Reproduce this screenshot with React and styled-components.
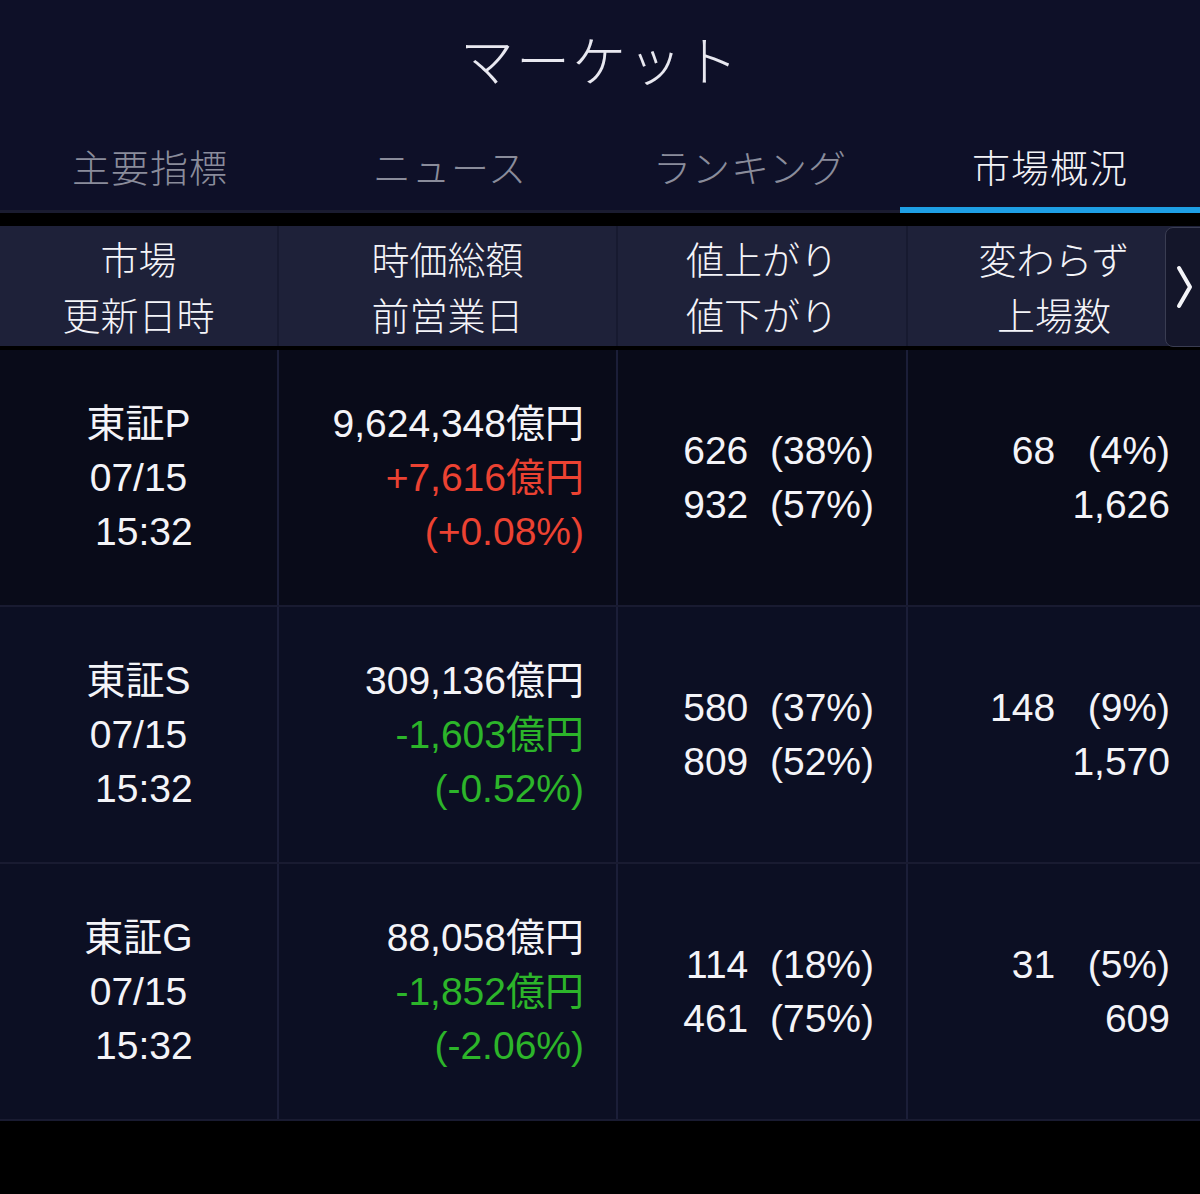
import React from 'react';
import styled, { createGlobalStyle } from 'styled-components';

const GlobalStyle = createGlobalStyle`
  html, body {
    margin: 0;
    padding: 0;
    background: #000;
  }
  body {
    font-family: "Liberation Sans", "Noto Sans CJK JP", sans-serif;
    color: #f4f4f8;
  }
`;

const Screen = styled.div`
  width: 1200px;
  height: 1194px;
  background: #000;
  overflow: hidden;
`;

const TitleBar = styled.header`
  height: 125px;
  background: #0e1028;
  display: flex;
  align-items: center;
  justify-content: center;
`;

const Title = styled.h1`
  margin: 0;
  font-family: "Noto Sans CJK JP", sans-serif;
  font-size: 54px;
  font-weight: 300;
  letter-spacing: 2px;
  color: #e8e8f0;
  padding-bottom: 8px;
`;

const TabBar = styled.nav`
  height: 88px;
  background: #0e1028;
  display: grid;
  grid-template-columns: repeat(4, 1fr);
  border-bottom: 3px solid #1a1c30;
  box-sizing: border-box;
`;

const Tab = styled.div`
  position: relative;
  display: flex;
  align-items: center;
  justify-content: center;
  padding-bottom: 4px;
  font-family: "Noto Sans CJK JP", sans-serif;
  font-size: 38px;
  font-weight: 300;
  letter-spacing: 1px;
  color: ${p => (p.$active ? '#f2f2f6' : '#8a8c9b')};

  &::after {
    content: '';
    display: ${p => (p.$active ? 'block' : 'none')};
    position: absolute;
    left: 0;
    right: 0;
    bottom: -3px;
    height: 6px;
    background: #1e9fe4;
  }
`;

const Table = styled.section`
  margin-top: 13px;
`;

const cols = '277px 339px 290px 1fr';

const HeadRow = styled.div`
  position: relative;
  height: 120px;
  display: grid;
  grid-template-columns: ${cols};
  background: #1e2139;
  border-bottom: 4px solid #000;
`;

const HeadCell = styled.div`
  display: flex;
  flex-direction: column;
  align-items: center;
  justify-content: center;
  font-family: "Noto Sans CJK JP", sans-serif;
  font-size: 38px;
  font-weight: 300;
  line-height: 56px;
  color: #f4f4f8;
  border-left: ${p => (p.$first ? 'none' : '2px solid #171a30')};
`;

const MoreButton = styled.button`
  position: absolute;
  top: 1px;
  right: -6px;
  width: 41px;
  height: 120px;
  border: 1px solid #3a3d52;
  border-radius: 8px 0 0 8px;
  background: #14162a;
  padding: 0 0 0 9px;
  display: flex;
  align-items: center;
  justify-content: flex-start;
  cursor: pointer;
`;

const Row = styled.div`
  height: 255px;
  display: grid;
  grid-template-columns: ${cols};
  background: ${p => (p.$alt ? '#0c0f23' : '#090b19')};
  border-bottom: 2px solid #191b31;
`;

const Cell = styled.div`
  display: flex;
  flex-direction: column;
  justify-content: center;
  align-items: ${p => (p.$center ? 'center' : 'flex-end')};
  padding-right: ${p => p.$pad || 0}px;
  font-size: 39px;
  line-height: 54px;
  white-space: pre;
  border-left: ${p => (p.$first ? 'none' : '2px solid #1b1e38')};
`;

const Line = styled.span`
  color: ${p => (p.$tone === 'up' ? '#ec4232' : p.$tone === 'down' ? '#2cb52a' : '#f4f4f8')};
`;

const markets = [
  {
    name: '東証P',
    cap: '9,624,348億円',
    diff: '+7,616億円',
    pct: '(+0.08%)',
    tone: 'up',
    up: '626  (38%)',
    down: '932  (57%)',
    flat: '68   (4%)',
    listed: '1,626'
  },
  {
    name: '東証S',
    cap: '309,136億円',
    diff: '-1,603億円',
    pct: '(-0.52%)',
    tone: 'down',
    up: '580  (37%)',
    down: '809  (52%)',
    flat: '148   (9%)',
    listed: '1,570'
  },
  {
    name: '東証G',
    cap: '88,058億円',
    diff: '-1,852億円',
    pct: '(-2.06%)',
    tone: 'down',
    up: '114  (18%)',
    down: '461  (75%)',
    flat: '31   (5%)',
    listed: '609'
  }
];

const tabs = ['主要指標', 'ニュース', 'ランキング', '市場概況'];

function Chevron() {
  return (
    <svg width="20" height="48" viewBox="0 0 20 48">
      <path
        d="M4 5 L15 24 L4 43"
        fill="none"
        stroke="#f4f4f8"
        strokeWidth="4"
        strokeLinecap="round"
        strokeLinejoin="round"
      />
    </svg>
  );
}

export default function App() {
  return (
    <Screen>
      <GlobalStyle />
      <TitleBar>
        <Title>マーケット</Title>
      </TitleBar>
      <TabBar>
        {tabs.map((t, i) => (
          <Tab key={t} $active={i === 3}>
            {t}
          </Tab>
        ))}
      </TabBar>
      <Table>
        <HeadRow>
          <HeadCell $first>
            <span>市場</span>
            <span>更新日時</span>
          </HeadCell>
          <HeadCell>
            <span>時価総額</span>
            <span>前営業日</span>
          </HeadCell>
          <HeadCell>
            <span>値上がり</span>
            <span>値下がり</span>
          </HeadCell>
          <HeadCell>
            <span>変わらず</span>
            <span>上場数</span>
          </HeadCell>
          <MoreButton aria-label="次へ">
            <Chevron />
          </MoreButton>
        </HeadRow>
        {markets.map((m, i) => (
          <Row key={m.name} $alt={i > 0}>
            <Cell $first $center>
              <Line>{m.name}</Line>
              <Line>07/15</Line>
              <Line>{' 15:32'}</Line>
            </Cell>
            <Cell $pad={32}>
              <Line>{m.cap}</Line>
              <Line $tone={m.tone}>{m.diff}</Line>
              <Line $tone={m.tone}>{m.pct}</Line>
            </Cell>
            <Cell $pad={32}>
              <Line>{m.up}</Line>
              <Line>{m.down}</Line>
            </Cell>
            <Cell $pad={30}>
              <Line>{m.flat}</Line>
              <Line>{m.listed}</Line>
            </Cell>
          </Row>
        ))}
      </Table>
    </Screen>
  );
}
